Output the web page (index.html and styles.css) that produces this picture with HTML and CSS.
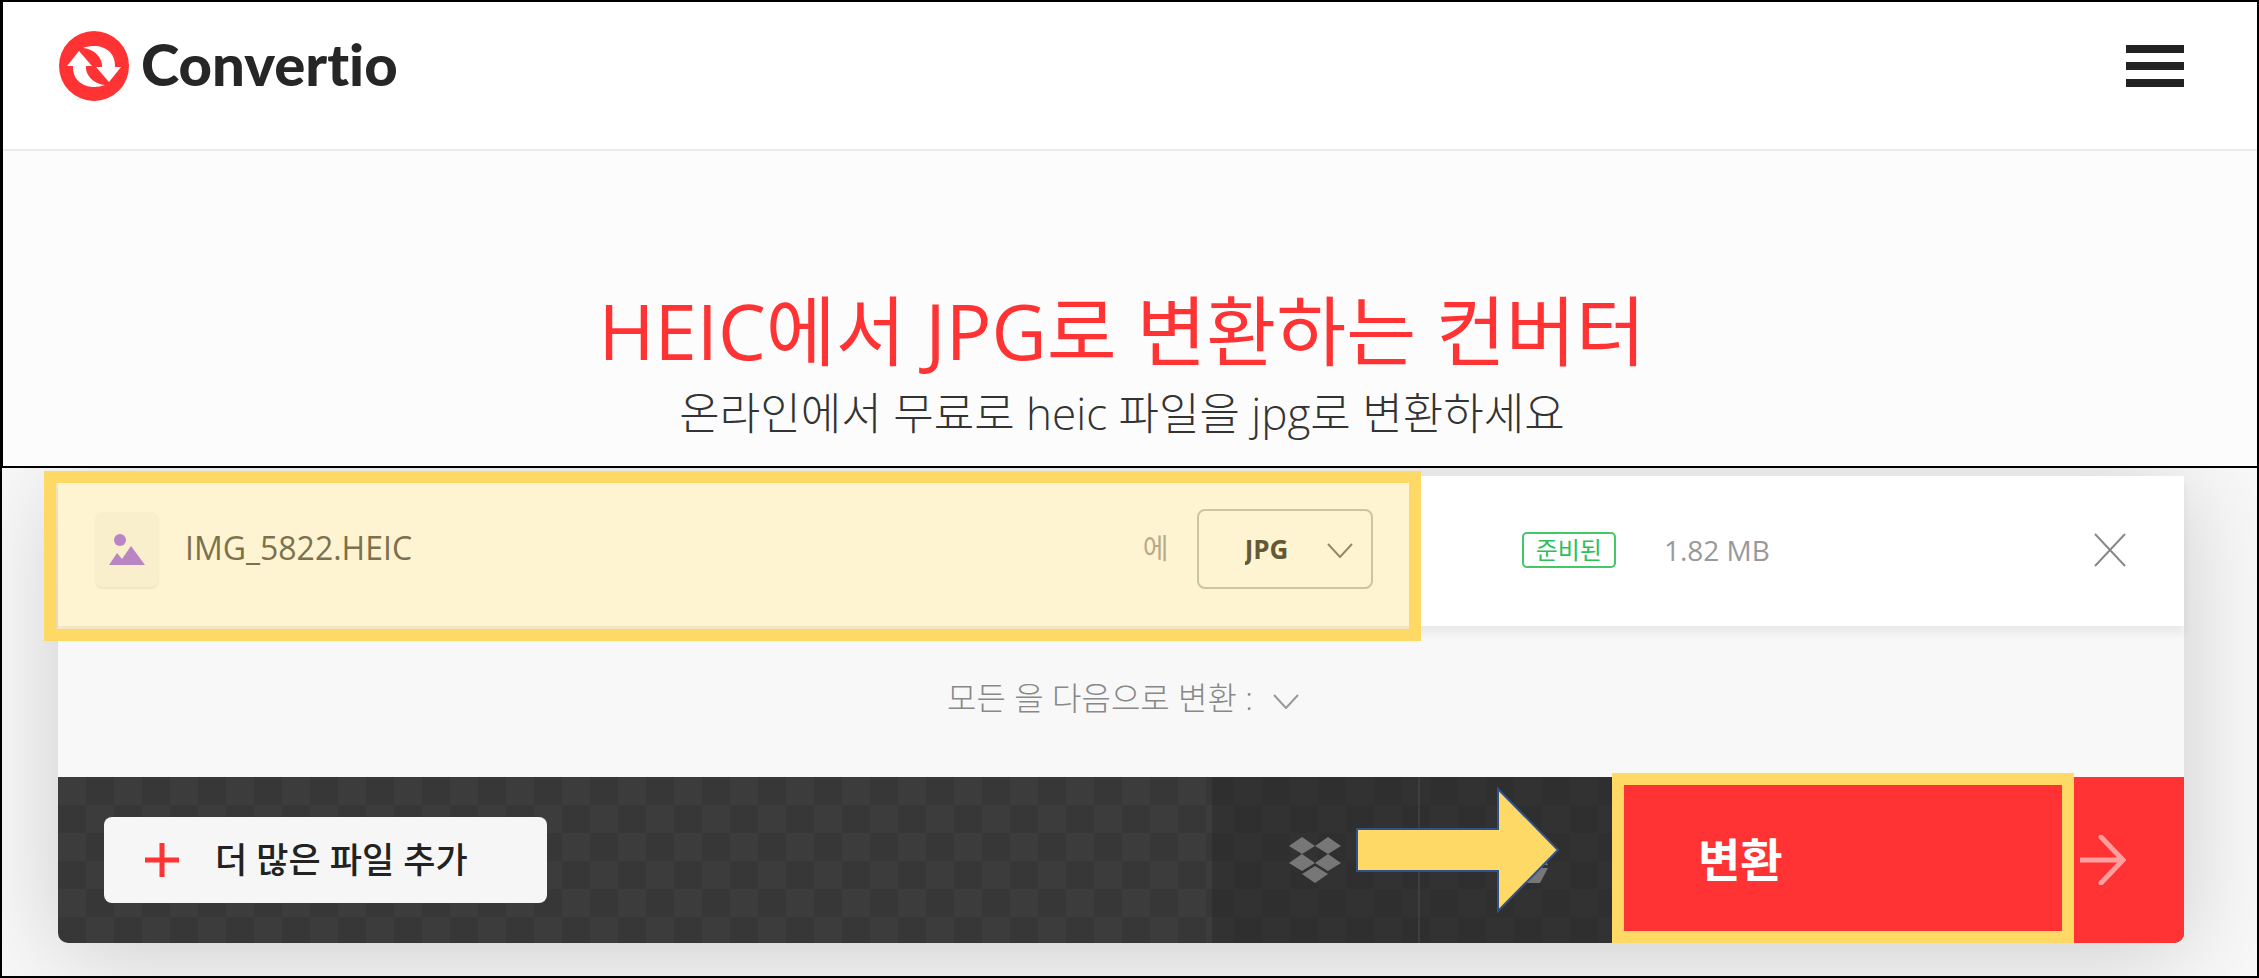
FILE: index.html
```html
<!DOCTYPE html>
<html lang="ko">
<head>
    <meta charset="UTF-8">
    <meta name="viewport" content="width=device-width, initial-scale=1.0">
    <title>HEIC JPG 변환 - Convertio</title>
    <link rel="stylesheet" href="styles.css">
</head>
<body>
    <div class="intro">
        <header class="header">
            <a class="logo" href="#">
                <svg class="logo-icon" viewBox="0 0 70 70" aria-hidden="true">
                    <circle cx="35" cy="35" r="35" fill="#ff3333"/>
                    <path fill="#fff" d="M24 17C41 11 57 19 56 36H62L50 51L37 36H43C44 28 36 18 24 17Z"/>
                    <path fill="#fff" d="M46 54C30 60 13 52 14 35H8L20 20L33 35H27C26 43 34 53 46 54Z"/>
                </svg>
                <span class="logo-text">Convertio</span>
            </a>
            <button class="menu-btn" type="button" aria-label="메뉴">
                <span></span>
                <span></span>
                <span></span>
            </button>
        </header>
        <div class="hero">
            <h1>HEIC에서 JPG로 변환하는 컨버터</h1>
            <p>온라인에서 무료로 heic 파일을 jpg로 변환하세요</p>
        </div>
    </div>

    <main class="workspace">
        <div class="card">
            <div class="file-row">
                <div class="file-source">
                    <div class="file-icon">
                        <svg viewBox="0 0 36 32" aria-hidden="true">
                            <circle cx="11" cy="7" r="6"/>
                            <path d="M0 32L8 20L13 26L22 13L36 32Z"/>
                        </svg>
                    </div>
                    <span class="file-name">IMG_5822.HEIC</span>
                    <label class="to-label" for="format">에</label>
                    <div class="format">
                        <select id="format">
                            <option>JPG</option>
                            <option>PNG</option>
                            <option>PDF</option>
                        </select>
                        <svg class="chevron" viewBox="0 0 26 15" aria-hidden="true"><path d="M1 1L13 14L25 1"/></svg>
                    </div>
                    <div class="highlight highlight-file"></div>
                </div>
                <div class="file-status">
                    <span class="badge">준비된</span>
                    <span class="file-size">1.82 MB</span>
                    <button class="remove-btn" type="button" aria-label="삭제">
                        <svg viewBox="0 0 32 34" aria-hidden="true"><path d="M1 1L31 33M31 1L1 33"/></svg>
                    </button>
                </div>
            </div>

            <div class="convert-all">
                <button type="button">
                    모든 을 다음으로 변환 :
                    <svg class="chevron" viewBox="0 0 26 15" aria-hidden="true"><path d="M1 1L13 14L25 1"/></svg>
                </button>
            </div>

            <div class="actions">
                <div class="add">
                    <button class="add-btn" type="button">
                        <svg viewBox="0 0 34 34" aria-hidden="true"><path d="M17 0V34M0 17H34"/></svg>
                        <span class="btn-text">더 많은 파일 추가</span>
                    </button>
                </div>
                <div class="cloud">
                    <button type="button" aria-label="Dropbox">
                        <svg viewBox="0 0 52 46" aria-hidden="true">
                            <path d="M13 0L26 9L13 17L0 9ZM39 0L52 9L39 17L26 9ZM13 17L26 26L13 34L0 26ZM39 17L52 26L39 34L26 26ZM26 29L39 37L26 46L13 37Z"/>
                        </svg>
                    </button>
                    <button type="button" aria-label="Google Drive">
                        <svg viewBox="0 0 52 46" aria-hidden="true">
                            <path d="M18 0H34L52 28H35ZM16 2L25 17L8 46L0 31ZM19 31H52L44 46H10Z"/>
                        </svg>
                    </button>
                    <svg class="pointer" viewBox="0 0 204 128" aria-hidden="true">
                        <path d="M1 43H142V3L202 64L142 125V85H1Z"/>
                    </svg>
                </div>
                <button class="convert-btn" type="button">
                    <span class="btn-text">변환</span>
                    <svg viewBox="0 0 46 50" aria-hidden="true"><path d="M0 25H43M21 2L43 25L21 48"/></svg>
                    <span class="highlight highlight-convert"></span>
                </button>
            </div>
        </div>
    </main>
</body>
</html>
```

FILE: styles.css
```css
* {
    box-sizing: border-box;
}
body {
    margin: 0;
    min-height: 100vh;
    display: flex;
    flex-direction: column;
    font-family: "Open Sans", "Noto Sans CJK KR", sans-serif;
    background-color: #f8f8f8;
    color: #222;
}
button, select {
    font-family: inherit;
    border: none;
    background: none;
    padding: 0;
    cursor: pointer;
}
svg {
    display: block;
    flex-shrink: 0;
}

/* Header + title */
.intro {
    background-color: #fcfcfc;
    border: 2px solid #000;
    border-left-width: 3px;
}
.header {
    display: flex;
    justify-content: space-between;
    align-items: center;
    height: 149px;
    padding: 0 73px 20px 56px;
    background-color: #fff;
    border-bottom: 2px solid #ebebeb;
}
.logo {
    display: flex;
    align-items: center;
    gap: 12px;
    color: #262626;
    text-decoration: none;
}
.logo-icon {
    width: 70px;
    height: 70px;
}
.logo-text {
    font-family: Lato, sans-serif;
    font-size: 58px;
    font-weight: 900;
    line-height: 66px;
    padding-bottom: 4px;
    font-variant-ligatures: none;
}
.menu-btn {
    display: flex;
    flex-direction: column;
    gap: 9px;
    width: 58px;
}
.menu-btn span {
    height: 8px;
    background-color: #222;
}
.hero {
    padding: 130px 36px 21px 20px;
    text-align: center;
}
.hero h1 {
    margin: 0;
    font-size: 76px;
    font-weight: 400;
    line-height: 100px;
    color: #ff3333;
}
.hero p {
    margin: 0;
    font-size: 44px;
    font-weight: 300;
    line-height: 64px;
    color: #333;
}

/* Converter card */
.workspace {
    flex: 1;
    padding: 8px 73px 33px 56px;
    border: solid #000;
    border-width: 0 2px 2px;
    overflow: hidden;
}
.card {
    border-radius: 0 0 10px 10px;
    box-shadow: 0 10px 100px rgba(0, 0, 0, 0.18);
}
.file-row {
    position: relative;
    display: flex;
    height: 150px;
    background-color: #fff;
    box-shadow: 0 8px 8px rgba(0, 0, 0, 0.06);
}
.file-source {
    position: relative;
    display: flex;
    align-items: center;
    width: 64%;
    padding: 0 46px 4px 37px;
}
.file-icon {
    display: flex;
    align-items: center;
    justify-content: center;
    width: 64px;
    height: 75px;
    border-radius: 8px;
    background-color: #f8f8f8;
    box-shadow: 0 2px 1px #ececec;
}
.file-icon svg {
    width: 36px;
    height: 32px;
    fill: #9b62eb;
}
.file-name {
    margin-left: 26px;
    padding-bottom: 4px;
    font-size: 32px;
    color: #444;
}
.to-label {
    margin-left: auto;
    padding-bottom: 4px;
    font-size: 28px;
    color: #999;
}
.format {
    position: relative;
    margin-left: 28px;
}
.format select {
    width: 176px;
    height: 80px;
    padding-left: 46px;
    border: 2px solid #bbb;
    border-radius: 8px;
    font-size: 26px;
    font-weight: 700;
    color: #222;
    appearance: none;
}
.chevron {
    width: 26px;
    height: 15px;
    fill: none;
    stroke: #666;
    stroke-width: 2;
}
.format .chevron {
    position: absolute;
    top: 34px;
    right: 20px;
    pointer-events: none;
}
.file-status {
    flex: 1;
    display: flex;
    align-items: center;
    padding: 0 58px 2px 103px;
}
.badge {
    padding: 0 12px;
    border: 2px solid #44c767;
    border-radius: 5px;
    font-size: 24px;
    line-height: 32px;
    color: #2fbf57;
}
.file-size {
    margin-left: 48px;
    font-size: 28px;
    color: #999;
}
.remove-btn {
    margin-left: auto;
}
.remove-btn svg {
    width: 32px;
    height: 34px;
    stroke: #888;
    stroke-width: 2;
}
.convert-all {
    display: flex;
    justify-content: center;
    height: 151px;
    padding: 0 0 12px 4px;
    background-color: #f8f8f8;
}
.convert-all button {
    display: flex;
    align-items: center;
    gap: 20px;
    font-size: 32px;
    font-weight: 300;
    color: #888;
}
.convert-all .chevron {
    margin-top: 12px;
    stroke: #999;
}

/* Bottom bar */
.actions {
    display: flex;
    height: 166px;
    border-radius: 0 0 10px 10px;
    background: repeating-conic-gradient(#373737 0 25%, #3c3c3c 0 50%) 0 0 / 56px 56px;
}
.btn-text {
    padding-bottom: 6px;
}
.add {
    flex: 1;
    display: flex;
    align-items: center;
    padding-left: 46px;
}
.add-btn {
    display: flex;
    align-items: center;
    gap: 36px;
    width: 443px;
    height: 86px;
    padding-left: 41px;
    border-radius: 8px;
    background-color: #f6f6f6;
    font-size: 35px;
    font-weight: 500;
    color: #222;
}
.add-btn svg {
    width: 34px;
    height: 34px;
    stroke: #ff3333;
    stroke-width: 5;
}
.cloud {
    position: relative;
    display: flex;
    background-color: rgba(40, 40, 40, 0.5);
}
.cloud button {
    display: flex;
    align-items: center;
    justify-content: center;
    width: 206px;
}
.cloud button + button {
    border-left: 2px solid #3e3e3e;
}
.cloud button svg {
    width: 52px;
    height: 46px;
    fill: #777;
}
.pointer {
    position: absolute;
    top: 9px;
    left: 144px;
    width: 204px;
    height: 128px;
    fill: #ffd966;
    stroke: #2f528f;
    stroke-width: 2;
}
.convert-btn {
    position: relative;
    display: flex;
    align-items: center;
    justify-content: space-between;
    width: 560px;
    padding: 0 58px 0 74px;
    border-radius: 0 0 10px 0;
    background-color: #ff3333;
    font-size: 46px;
    font-weight: 700;
    color: #fff;
}
.convert-btn svg {
    width: 46px;
    height: 50px;
    fill: none;
    stroke: #ff9f9f;
    stroke-width: 5;
    stroke-linecap: round;
}

/* Yellow marker frames */
.highlight {
    position: absolute;
    border: 12px solid #ffd966;
    pointer-events: none;
}
.highlight-file {
    inset: -5px -2px -15px -14px;
    background-color: rgba(255, 217, 102, 0.3);
}
.highlight-convert {
    inset: -4px 110px 0 -12px;
}
```
